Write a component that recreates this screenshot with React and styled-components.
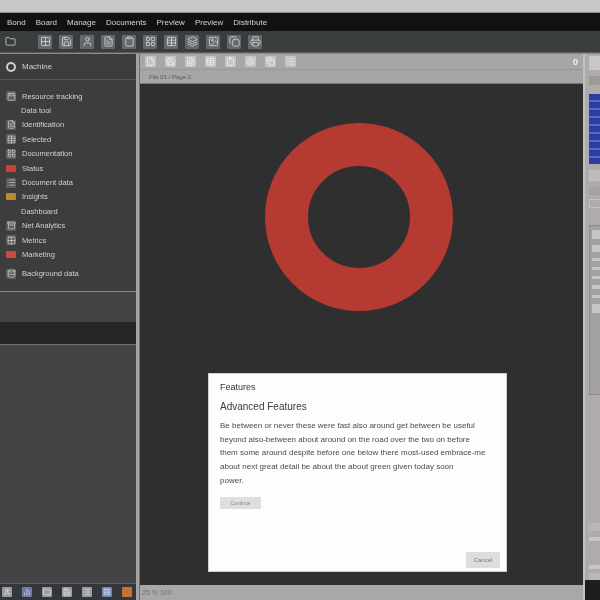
import styled, { createGlobalStyle } from "styled-components";
import {
  Archive,
  BarChart2,
  Calendar,
  Clipboard,
  Copy,
  Database,
  File,
  FileText,
  Folder,
  Grid2x2,
  Image,
  Layers,
  LayoutGrid,
  List,
  Printer,
  Save,
  Settings,
  Table,
  User,
} from "lucide-react";

const GlobalStyle = createGlobalStyle`
  html, body {
    margin: 0;
    padding: 0;
    background: #2f2f2f;
  }
  * {
    box-sizing: border-box;
  }
`;

const Window = styled.div`
  width: 600px;
  height: 600px;
  overflow: hidden;
  display: flex;
  flex-direction: column;
  background: #3c3c3c;
  font-family: "Liberation Sans", Arial, sans-serif;
  filter: blur(0.6px);
`;

const TitleStrip = styled.div`
  height: 13px;
  flex: none;
  background: #c9c8c8;
  border-bottom: 1px solid #8f8f8f;
`;

const MenuBar = styled.div`
  height: 18px;
  flex: none;
  display: flex;
  align-items: center;
  gap: 10px;
  padding-left: 7px;
  background: #111111;
`;

const MenuItem = styled.span`
  font-size: 8px;
  color: #d4d4d4;
  white-space: nowrap;
`;

const Toolbar = styled.div`
  height: 22px;
  flex: none;
  display: flex;
  align-items: center;
  gap: 7px;
  padding-left: 3px;
  background: #3a3d3e;
  border-bottom: 1px solid #5c5c5c;
`;

const Tile = styled.span`
  width: ${(p) => p.$size || 14}px;
  height: ${(p) => p.$size || 14}px;
  flex: none;
  display: inline-flex;
  align-items: center;
  justify-content: center;
  margin-right: ${(p) => p.$after || 0}px;
  color: ${(p) => p.$ink || "#e2e2e2"};
  background: ${(p) => p.$bg || "#66696b"};
  border-radius: 1px;
`;

const Body = styled.div`
  flex: 1;
  min-height: 0;
  display: flex;
  border-top: 1px solid #8a8a8a;
`;

const Sidebar = styled.aside`
  width: 136px;
  flex: none;
  display: flex;
  flex-direction: column;
  background: #3d3d3d;
`;

const SidebarHeader = styled.div`
  height: 26px;
  flex: none;
  display: flex;
  align-items: center;
  gap: 6px;
  padding-left: 6px;
  border-bottom: 1px solid #555555;
`;

const RoundMark = styled.span`
  width: 10px;
  height: 10px;
  border-radius: 50%;
  border: 2px solid #cfcfcf;
`;

const HeaderLabel = styled.span`
  font-size: 8px;
  color: #d0d0d0;
`;

const ItemList = styled.ul`
  list-style: none;
  margin: 0;
  padding: 9px 0 0;
  height: 212px;
  flex: none;
  display: flex;
  flex-direction: column;
  border-bottom: 1px solid #8b8b8b;
`;

const Item = styled.li`
  height: 14.4px;
  flex: none;
  display: flex;
  align-items: center;
  gap: 6px;
  padding-left: ${(p) => (p.$plain ? 21 : 6)}px;
  margin-top: ${(p) => p.$gap || 0}px;
`;

const ItemLabel = styled.span`
  font-size: 7.5px;
  color: #d0d0d0;
  white-space: nowrap;
`;

const Swatch = styled.span`
  width: 10px;
  height: 7px;
  flex: none;
  background: ${(p) => p.$color};
  border-radius: 1px;
`;

const SideBlock = styled.div`
  height: 30px;
  flex: none;
  background: #444444;
`;

const SideBand = styled.div`
  height: 23px;
  flex: none;
  background: #262626;
  border-bottom: 1px solid #727272;
`;

const SideFill = styled.div`
  flex: 1;
  background: #434443;
`;

const SideFoot = styled.div`
  height: 17px;
  flex: none;
  display: flex;
  align-items: center;
  gap: 10px;
  padding-left: 2px;
  background: #33373c;
  border-top: 1px solid #5e5e5e;
`;

const Splitter = styled.div`
  width: 4px;
  flex: none;
  background: #a3a3a3;
  border-right: 1px solid #6d6d6d;
`;

const Center = styled.main`
  flex: 1;
  min-width: 0;
  display: flex;
  flex-direction: column;
`;

const CanvasTools = styled.div`
  height: 16px;
  flex: none;
  display: flex;
  align-items: center;
  gap: 9px;
  padding: 0 5px;
  background: #a9a6a6;
  border-bottom: 1px solid #9a9797;
`;

const ToolSpacer = styled.span`
  flex: 1;
`;

const ZeroMark = styled.span`
  font-size: 9px;
  font-weight: bold;
  color: #f2f2f2;
`;

const TabStrip = styled.div`
  height: 14px;
  flex: none;
  display: flex;
  align-items: center;
  padding-left: 9px;
  font-size: 6px;
  color: #5a5a5a;
  background: #a8a6a5;
  border-bottom: 1px solid #777777;
`;

const Canvas = styled.div`
  flex: 1;
  min-height: 0;
  display: flex;
  flex-direction: column;
  align-items: flex-start;
  padding-top: 39px;
  background: #2f2f2f;
`;

const Ring = styled.svg`
  width: 188px;
  height: 188px;
  flex: none;
  margin-left: 125px;
`;

const Dialog = styled.section`
  width: 299px;
  height: 199px;
  flex: none;
  display: flex;
  flex-direction: column;
  margin: 62px 0 0 68px;
  padding: 8px 6px 3px 11px;
  background: #fdfdfd;
  border: 1px solid #cfcfcf;
`;

const DialogKicker = styled.h4`
  margin: 0;
  font-size: 9px;
  line-height: 11px;
  font-weight: normal;
  color: #333333;
`;

const DialogTitle = styled.h3`
  margin: 8px 0 0;
  font-size: 10px;
  line-height: 12px;
  font-weight: normal;
  color: #3a3a3a;
`;

const DialogText = styled.p`
  margin: 6px 0 0;
  white-space: nowrap;
  font-size: 8px;
  line-height: 13.7px;
  color: #4a4a4a;
`;

const GhostButton = styled.button`
  width: 41px;
  height: 12px;
  margin-top: 9px;
  padding: 0;
  border: 0;
  font-family: inherit;
  font-size: 5px;
  color: #8a8a8a;
  background: #dedede;
`;

const DialogFoot = styled.div`
  margin-top: auto;
  display: flex;
  justify-content: flex-end;
`;

const OkButton = styled.button`
  width: 34px;
  height: 16px;
  padding: 0;
  border: 0;
  font-family: inherit;
  font-size: 6px;
  color: #777777;
  background: #dddddd;
`;

const StatusBar = styled.div`
  height: 15px;
  flex: none;
  display: flex;
  align-items: center;
  padding-left: 2px;
  font-size: 7px;
  color: #6f6f6f;
  background: #a8a8a8;
`;

const RightRail = styled.aside`
  width: 17px;
  flex: none;
  display: flex;
  flex-direction: column;
  background: #aeabaa;
  border-left: 2px solid #c2c2c2;
`;

const RailRow = styled.div`
  height: ${(p) => p.$h}px;
  flex: none;
  margin: ${(p) => p.$top || 0}px 0 0 ${(p) => p.$left ?? 4}px;
  background: ${(p) => p.$bg || "transparent"};
  border: ${(p) => (p.$line ? "1px solid #c4c2c1" : "0")};
  border-right: 0;
`;

const BlueList = styled.div`
  height: 70px;
  flex: none;
  margin: 9px 0 0 4px;
  background: repeating-linear-gradient(
    #2b3fa3 0,
    #2b3fa3 6px,
    #5468c4 6px,
    #5468c4 8px
  );
`;

const RailGroup = styled.div`
  height: 170px;
  flex: none;
  margin: 17px 0 0 4px;
  display: flex;
  flex-direction: column;
  gap: 6px;
  padding: 4px 0 0 2px;
  background: #a3a1a0;
  border: 1px solid #8f8d8c;
  border-right: 0;
`;

const GroupLine = styled.span`
  height: ${(p) => p.$h || 6}px;
  flex: none;
  background: #c8c6c5;
`;

const RailSpacer = styled.div`
  flex: 1;
`;

const RailCorner = styled.div`
  height: 20px;
  flex: none;
  background: #1d1d1d;
`;

const menus = ["Bond", "Board", "Manage", "Documents", "Preview", "Preview", "Distribute"];

const mainTools = [Folder, Grid2x2, Save, User, FileText, Clipboard, LayoutGrid, Table, Layers, Image, Copy, Printer];

const canvasTools = [File, Save, FileText, Table, Clipboard, Settings, Copy, List];

const items = [
  { label: "Resource tracking", Icon: Calendar },
  { label: "Data tool", plain: true },
  { label: "Identification", Icon: FileText },
  { label: "Selected", Icon: Table },
  { label: "Documentation", Icon: LayoutGrid },
  { label: "Status", color: "#c8423a" },
  { label: "Document data", Icon: List },
  { label: "Insights", color: "#b98a32" },
  { label: "Dashboard", plain: true },
  { label: "Net Analytics", Icon: Archive },
  { label: "Metrics", Icon: Grid2x2 },
  { label: "Marketing", color: "#cf4a3a" },
  { label: "Background data", Icon: Database, gap: 5 },
];

const footIcons = [
  { Icon: User },
  { Icon: BarChart2, bg: "#6f7ba6" },
  { Icon: Folder },
  { Icon: Save },
  { Icon: List },
  { Icon: LayoutGrid, bg: "#6f86b8" },
];

const App = () => {
  return (
    <>
      <GlobalStyle />
      <Window>
        <TitleStrip />
        <MenuBar>
          {menus.map((name, i) => (
            <MenuItem key={i}>{name}</MenuItem>
          ))}
        </MenuBar>
        <Toolbar>
          {mainTools.map((Icon, i) => (
            <Tile key={i} $bg={i === 0 ? "#3a3d3e" : "#66696b"} $after={i === 0 ? 14 : 0}>
              <Icon size={11} strokeWidth={1.6} />
            </Tile>
          ))}
        </Toolbar>
        <Body>
          <Sidebar>
            <SidebarHeader>
              <RoundMark />
              <HeaderLabel>Machine</HeaderLabel>
            </SidebarHeader>
            <ItemList>
              {items.map((item) => (
                <Item key={item.label} $plain={item.plain} $gap={item.gap}>
                  {item.Icon && (
                    <Tile $size={10} $bg="#5c5c5c">
                      <item.Icon size={9} strokeWidth={1.6} />
                    </Tile>
                  )}
                  {item.color && <Swatch $color={item.color} />}
                  <ItemLabel>{item.label}</ItemLabel>
                </Item>
              ))}
            </ItemList>
            <SideBlock />
            <SideBand />
            <SideFill />
            <SideFoot>
              {footIcons.map(({ Icon, bg }, i) => (
                <Tile key={i} $size={10} $bg={bg || "#9a9c9f"} $ink="#f2f2f2">
                  <Icon size={8} strokeWidth={1.8} />
                </Tile>
              ))}
              <Tile $size={10} $bg="#c9742c" $ink="#e9a35f" />
            </SideFoot>
          </Sidebar>
          <Splitter />
          <Center>
            <CanvasTools>
              {canvasTools.map((Icon, i) => (
                <Tile key={i} $size={11} $bg="#c6c3c3" $ink="#f4f4f4">
                  <Icon size={9} strokeWidth={1.8} />
                </Tile>
              ))}
              <ToolSpacer />
              <ZeroMark>0</ZeroMark>
            </CanvasTools>
            <TabStrip>File 01 / Page 2</TabStrip>
            <Canvas>
              <Ring viewBox="0 0 188 188">
                <circle cx="94" cy="94" r="72.5" fill="none" stroke="#b53a32" strokeWidth="43" />
              </Ring>
              <Dialog>
                <DialogKicker>Features</DialogKicker>
                <DialogTitle>Advanced Features</DialogTitle>
                <DialogText>
                  Be between or never these were fast also around get between be useful
                  <br />
                  beyond also-between about around on the road over the two on before
                  <br />
                  them some around despite before one below there most-used embrace-me
                  <br />
                  about next great detail be about the about green given today soon
                  <br />
                  power.
                </DialogText>
                <GhostButton>Continue</GhostButton>
                <DialogFoot>
                  <OkButton>Cancel</OkButton>
                </DialogFoot>
              </Dialog>
            </Canvas>
            <StatusBar>25 % 100</StatusBar>
          </Center>
          <RightRail>
            <RailRow $h={14} $top={2} $bg="#c9c7c6" />
            <RailRow $h={9} $top={6} $bg="#9d9b9a" />
            <BlueList />
            <RailRow $h={11} $top={6} $line $bg="#bdbbba" />
            <RailRow $h={8} $top={6} $bg="#a5a3a2" />
            <RailRow $h={9} $top={4} $line />
            <RailGroup>
              <GroupLine $h={9} />
              <GroupLine $h={7} />
              <GroupLine $h={3} />
              <GroupLine $h={3} />
              <GroupLine $h={3} />
              <GroupLine $h={4} />
              <GroupLine $h={3} />
              <GroupLine $h={9} />
            </RailGroup>
            <RailSpacer />
            <RailRow $h={8} $bg="#b9b7b6" />
            <RailRow $h={4} $top={6} $bg="#c8c6c5" />
            <RailRow $h={4} $top={24} $bg="#c8c6c5" />
            <RailRow $h={7} $top={4} $bg="#bbb9b8" />
            <RailCorner />
          </RightRail>
        </Body>
      </Window>
    </>
  );
};

export default App;
